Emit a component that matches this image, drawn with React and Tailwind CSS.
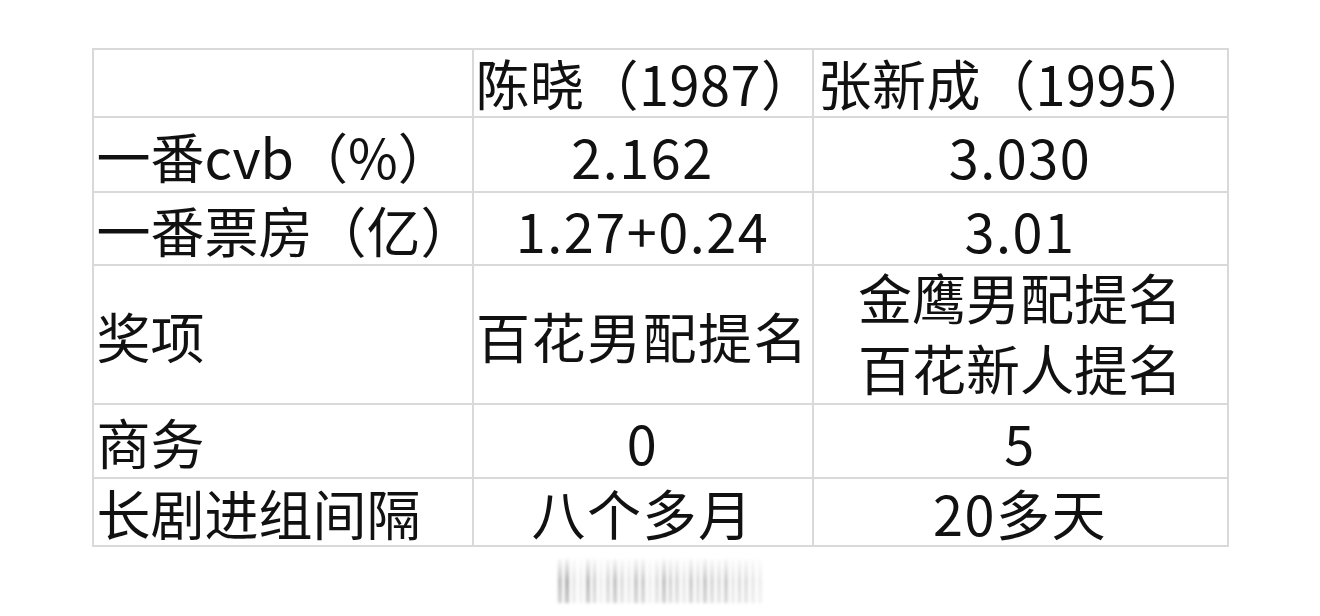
const rows = [
  { label: "一番cvb（%）", a: "2.162", b: "3.030", h: "h-[73px]" },
  { label: "一番票房（亿）", a: "1.27+0.24", b: "3.01", h: "h-[71px]" },
  { label: "奖项", a: "百花男配提名", b: ["金鹰男配提名", "百花新人提名"], h: "h-[137px]" },
  { label: "商务", a: "0", b: "5", h: "h-[72px]" },
  { label: "长剧进组间隔", a: "八个多月", b: "20多天", h: "h-[66px]" },
];

const bars = [
  0.55, 0.7, 0.2, 0.15, 0.6, 0.45, 0.15, 0.35, 0.55, 0.3, 0.2, 0.5, 0.45, 0.15, 0.3, 0.55, 0.45, 0.35,
  0.2, 0.45, 0.3, 0.5, 0.35, 0.3, 0.45, 0.2, 0.35, 0.3, 0.2, 0.15,
];

function Cell({ children, className = "" }) {
  return (
    <div className={`bg-white flex items-center whitespace-nowrap ${className}`}>{children}</div>
  );
}

export default function App() {
  return (
    <div
      className="w-[1320px] h-[616px] bg-white pt-[48px] text-[#111] text-[54px] leading-none"
      style={{ fontFamily: '"Noto Sans CJK SC", "Noto Sans", sans-serif' }}
    >
      <div className="w-[1137px] mx-auto grid grid-cols-[378px_338px_413px] gap-[2px] p-[2px] bg-[#d9d9d9]">
        <Cell className="h-[66px]" />
        <Cell className="h-[66px] pl-[2px] tracking-[0.5px]">陈晓（1987）</Cell>
        <Cell className="h-[66px] pl-[4px] tracking-[0.5px]">张新成（1995）</Cell>
        {rows.map((r) => (
          <>
            <Cell key={r.label} className={`${r.h} pl-[3px] pt-[2px]`}>{r.label}</Cell>
            <Cell key={r.label + "a"} className={`${r.h} justify-center pt-[2px] tracking-[1.5px]`}>
              {r.a}
            </Cell>
            <Cell key={r.label + "b"} className={`${r.h} justify-center pt-[2px] tracking-[1.5px]`}>
              {Array.isArray(r.b) ? (
                <div className="flex flex-col items-center gap-[17px] tracking-normal mb-[6px]">
                  {r.b.map((t) => (
                    <span key={t}>{t}</span>
                  ))}
                </div>
              ) : (
                r.b
              )}
            </Cell>
          </>
        ))}
      </div>
      <div className="w-[204px] h-[44px] mx-auto mt-[12px] flex gap-[3px] blur-[1.5px]">
        {bars.map((o, i) => (
          <div
            key={i}
            className="flex-1 bg-gradient-to-b from-[#eee] via-[#888] to-[#aaa]"
            style={{ opacity: o }}
          />
        ))}
      </div>
    </div>
  );
}
